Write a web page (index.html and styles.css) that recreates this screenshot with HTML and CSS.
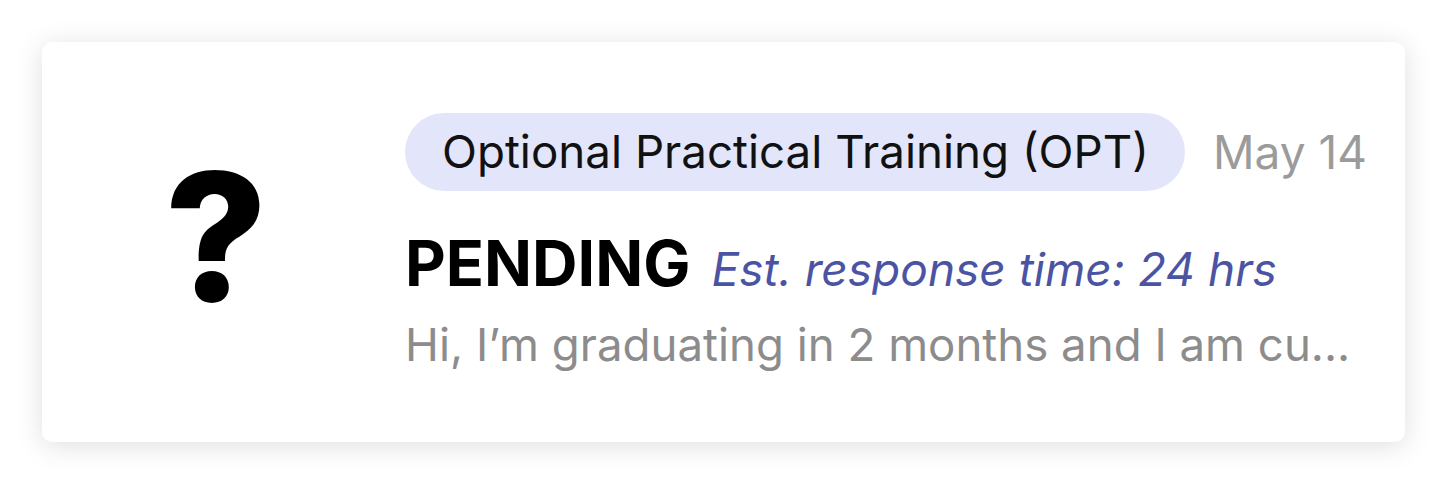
FILE: index.html
```html
<!DOCTYPE html>
<html>
<head>
<meta charset="utf-8">
<link rel="stylesheet" href="styles.css">
</head>
<body>
<div class="page">
  <div class="card">
    <div class="icon">?</div>
    <div class="content">
      <div class="top">
        <span class="pill">Optional Practical Training (OPT)</span>
        <span class="date">May 14</span>
      </div>
      <div class="status">
        <span class="state">PENDING</span>
        <span class="eta">Est. response time: 24 hrs</span>
      </div>
      <div class="preview">Hi, I’m graduating in 2 months and I am cu...</div>
    </div>
  </div>
</div>
</body>
</html>
```
FILE: styles.css
```css
* { box-sizing: border-box; }
html, body { margin: 0; background: #ffffff; }
body { font-family: Inter, "Noto Sans", sans-serif; }
.page { padding: 42px 43px 42px 42px; }
.card {
  height: 400px;
  background: #fff;
  border-radius: 10px;
  box-shadow: 0 4px 28px rgba(0, 0, 0, 0.13);
  display: flex;
  align-items: center;
}
.icon {
  flex: none;
  width: 348px;
  margin-top: -10px;
  text-align: center;
  font-size: 178px;
  font-weight: 800;
  line-height: 1;
  color: #000;
}
.content {
  flex: 1;
  margin-left: 15px;
  padding-right: 38px;
  min-width: 0;
}
.top {
  display: flex;
  align-items: center;
  justify-content: space-between;
}
.pill {
  background: #e3e5fa;
  height: 78px;
  border-radius: 39px;
  padding: 0 36px 0 37px;
  display: flex;
  align-items: center;
  font-size: 45.7px;
  color: #111;
}
.date {
  font-size: 46px;
  color: #9b9b9b;
}
.status {
  margin-top: 41px;
  display: flex;
  align-items: baseline;
  gap: 21px;
}
.state {
  font-size: 63px;
  font-weight: 700;
  color: #000;
  line-height: 1;
}
.eta {
  font-size: 46px;
  font-style: italic;
  color: #4b54a3;
}
.preview {
  margin-top: 20px;
  font-size: 45.6px;
  color: #8c8c8c;
  white-space: nowrap;
}
```
